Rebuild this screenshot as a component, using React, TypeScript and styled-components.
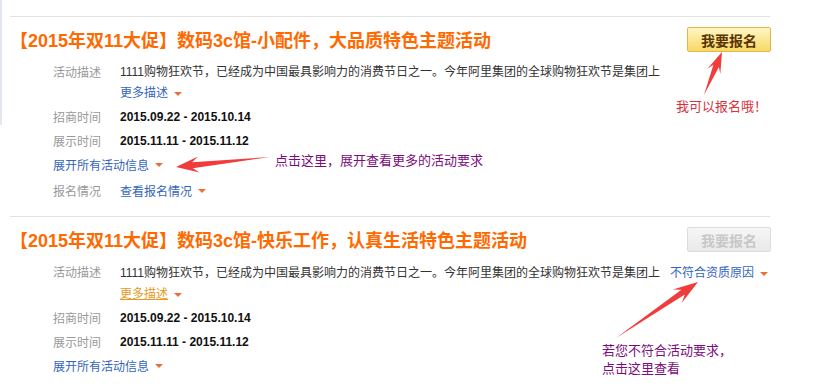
import React from 'react';
import styled, { createGlobalStyle, css } from 'styled-components';

const GlobalStyle = createGlobalStyle`
  html, body {
    margin: 0;
    padding: 0;
    background: #fff;
  }
  body {
    font-family: "Liberation Sans", "Noto Sans CJK SC", sans-serif;
    font-size: 12px;
    color: #333;
  }
`;

const Page = styled.div`
  position: relative;
  width: 815px;
  height: 390px;
  overflow: hidden;
`;

// faint edge left over from the cropped window on the far left
const EdgeRule = styled.div`
  position: absolute;
  left: 0;
  top: 0;
  width: 2px;
  height: 125px;
  background: #e2e6ee;
`;

const List = styled.div`
  margin-left: 10px;
  width: 760px;
  padding-top: 16px;
`;

const Item = styled.div`
  border-top: 1px solid #e3e3e3;
  padding: 10px 0 13px;
  &:last-child {
    border-bottom: 1px solid #e3e3e3;
  }
`;

const Header = styled.div`
  display: flex;
  justify-content: space-between;
  align-items: center;
  height: 25px;
`;

const Title = styled.h3`
  margin: -2px 0 0;
  font-family: "Liberation Sans", "Noto Sans CJK SC", sans-serif;
  font-size: 18px;
  font-weight: bold;
  color: #ff6a00;
`;

const JoinButton = styled.button<{ $disabled?: boolean }>`
  width: 84px;
  height: 25px;
  margin-right: -1px;
  padding: 0;
  font-family: "Noto Sans CJK SC", sans-serif;
  font-size: 14px;
  font-weight: bold;
  border-radius: 2px;
  cursor: pointer;
  ${p => p.$disabled ? css`
    background: linear-gradient(#f6f6f6, #e9e9e9);
    border: 1px solid #dcdcdc;
    color: #c8c8c8;
    cursor: default;
  ` : css`
    background: linear-gradient(#fef6c4, #f9d963);
    border: 1px solid #e2b54e;
    color: #5a3508;
  `}
`;

const Details = styled.div`
  margin-top: 8px;
  padding-left: 43px;
`;

const Row = styled.div<{ $gap?: number }>`
  display: flex;
  line-height: 24px;
  white-space: nowrap;
  margin-top: ${p => p.$gap || 0}px;
`;

const Label = styled.span`
  width: 67px;
  flex-shrink: 0;
  color: #999;
  font-family: "Noto Sans CJK SC", sans-serif;
`;

const Value = styled.div`
  color: #333;
`;

const Dates = styled.span`
  font-family: "Liberation Sans", Arial, sans-serif;
  font-weight: bold;
  color: #111;
`;

const MoreLine = styled.div`
  line-height: 16px;
`;

const Link = styled.a<{ $hover?: boolean; $gap?: number }>`
  font-family: "Noto Sans CJK SC", sans-serif;
  color: ${p => p.$hover ? '#e59b1c' : '#3366bb'};
  text-decoration: ${p => p.$hover ? 'underline' : 'none'};
  margin-left: ${p => p.$gap || 0}px;
  cursor: pointer;
`;

const Caret = styled.i<{ $drop?: number }>`
  display: inline-block;
  width: 0;
  height: 0;
  margin-left: 6px;
  margin-top: ${p => p.$drop || 0}px;
  vertical-align: middle;
  border-left: 4px solid transparent;
  border-right: 4px solid transparent;
  border-top: 4px solid #e8703a;
`;

const Note = styled.div<{ $color: string; $left: number; $top: number }>`
  position: absolute;
  left: ${p => p.$left}px;
  top: ${p => p.$top}px;
  font-family: "Noto Sans CJK SC", sans-serif;
  font-size: 13px;
  line-height: 18px;
  color: ${p => p.$color};
  white-space: nowrap;
`;

const Overlay = styled.svg`
  position: absolute;
  left: 0;
  top: 0;
  pointer-events: none;
`;

type Pt = [number, number];

const arrowPoints = (tail: Pt, tip: Pt, headLen: number, headW: number, shaftW: number) => {
  const dx = tip[0] - tail[0];
  const dy = tip[1] - tail[1];
  const len = Math.hypot(dx, dy);
  const ux = dx / len, uy = dy / len;
  const nx = -uy, ny = ux;
  const at = (back: number, side: number): Pt => [
    tip[0] - ux * back + nx * side,
    tip[1] - uy * back + ny * side,
  ];
  const pts: Pt[] = [
    tail,
    at(headLen * 0.72, shaftW / 2),
    at(headLen, headW / 2),
    tip,
    at(headLen, -headW / 2),
    at(headLen * 0.72, -shaftW / 2),
  ];
  return pts.map(p => p.map(v => v.toFixed(1)).join(',')).join(' ');
};

const DESC = '1111购物狂欢节，已经成为中国最具影响力的消费节日之一。今年阿里集团的全球购物狂欢节是集团上';

const activities = [
  {
    title: '【2015年双11大促】数码3c馆-小配件，大品质特色主题活动',
    open: true,
  },
  {
    title: '【2015年双11大促】数码3c馆-快乐工作，认真生活特色主题活动',
    open: false,
  },
];

export default function App() {
  return (
    <Page>
      <GlobalStyle />
      <EdgeRule />
      <List>
        {activities.map((a, i) => (
          <Item key={i}>
            <Header>
              <Title>{a.title}</Title>
              <JoinButton $disabled={!a.open}>我要报名</JoinButton>
            </Header>
            <Details>
              <Row>
                <Label>活动描述</Label>
                <Value>
                  {DESC}
                  {!a.open && (
                    <Link $gap={10}>不符合资质原因<Caret /></Link>
                  )}
                  <MoreLine>
                    <Link $hover={!a.open}>更多描述</Link><Caret />
                  </MoreLine>
                </Value>
              </Row>
              <Row $gap={4}>
                <Label>招商时间</Label>
                <Dates>2015.09.22 - 2015.10.14</Dates>
              </Row>
              <Row>
                <Label>展示时间</Label>
                <Dates>2015.11.11 - 2015.11.12</Dates>
              </Row>
              <Row>
                <Link>展开所有活动信息</Link><Caret $drop={10} />
              </Row>
              {a.open && (
                <Row $gap={2}>
                  <Label>报名情况</Label>
                  <Link>查看报名情况</Link><Caret $drop={10} />
                </Row>
              )}
            </Details>
          </Item>
        ))}
      </List>

      <Overlay width={815} height={390}>
        <g fill="#f23b3b">
          <polygon points={arrowPoints([270, 157], [176, 167], 23, 16, 6)} />
          <polygon points={arrowPoints([704, 95], [722, 52], 21, 14, 6)} />
          <polygon points={arrowPoints([616, 338], [698, 282], 25, 16, 6)} />
        </g>
      </Overlay>

      <Note $color="#7b0c7b" $left={275} $top={151}>点击这里，展开查看更多的活动要求</Note>
      <Note $color="#d8323c" $left={676} $top={97}>我可以报名哦！</Note>
      <Note $color="#7b0c7b" $left={602} $top={341}>
        若您不符合活动要求，<br />点击这里查看
      </Note>
    </Page>
  );
}
